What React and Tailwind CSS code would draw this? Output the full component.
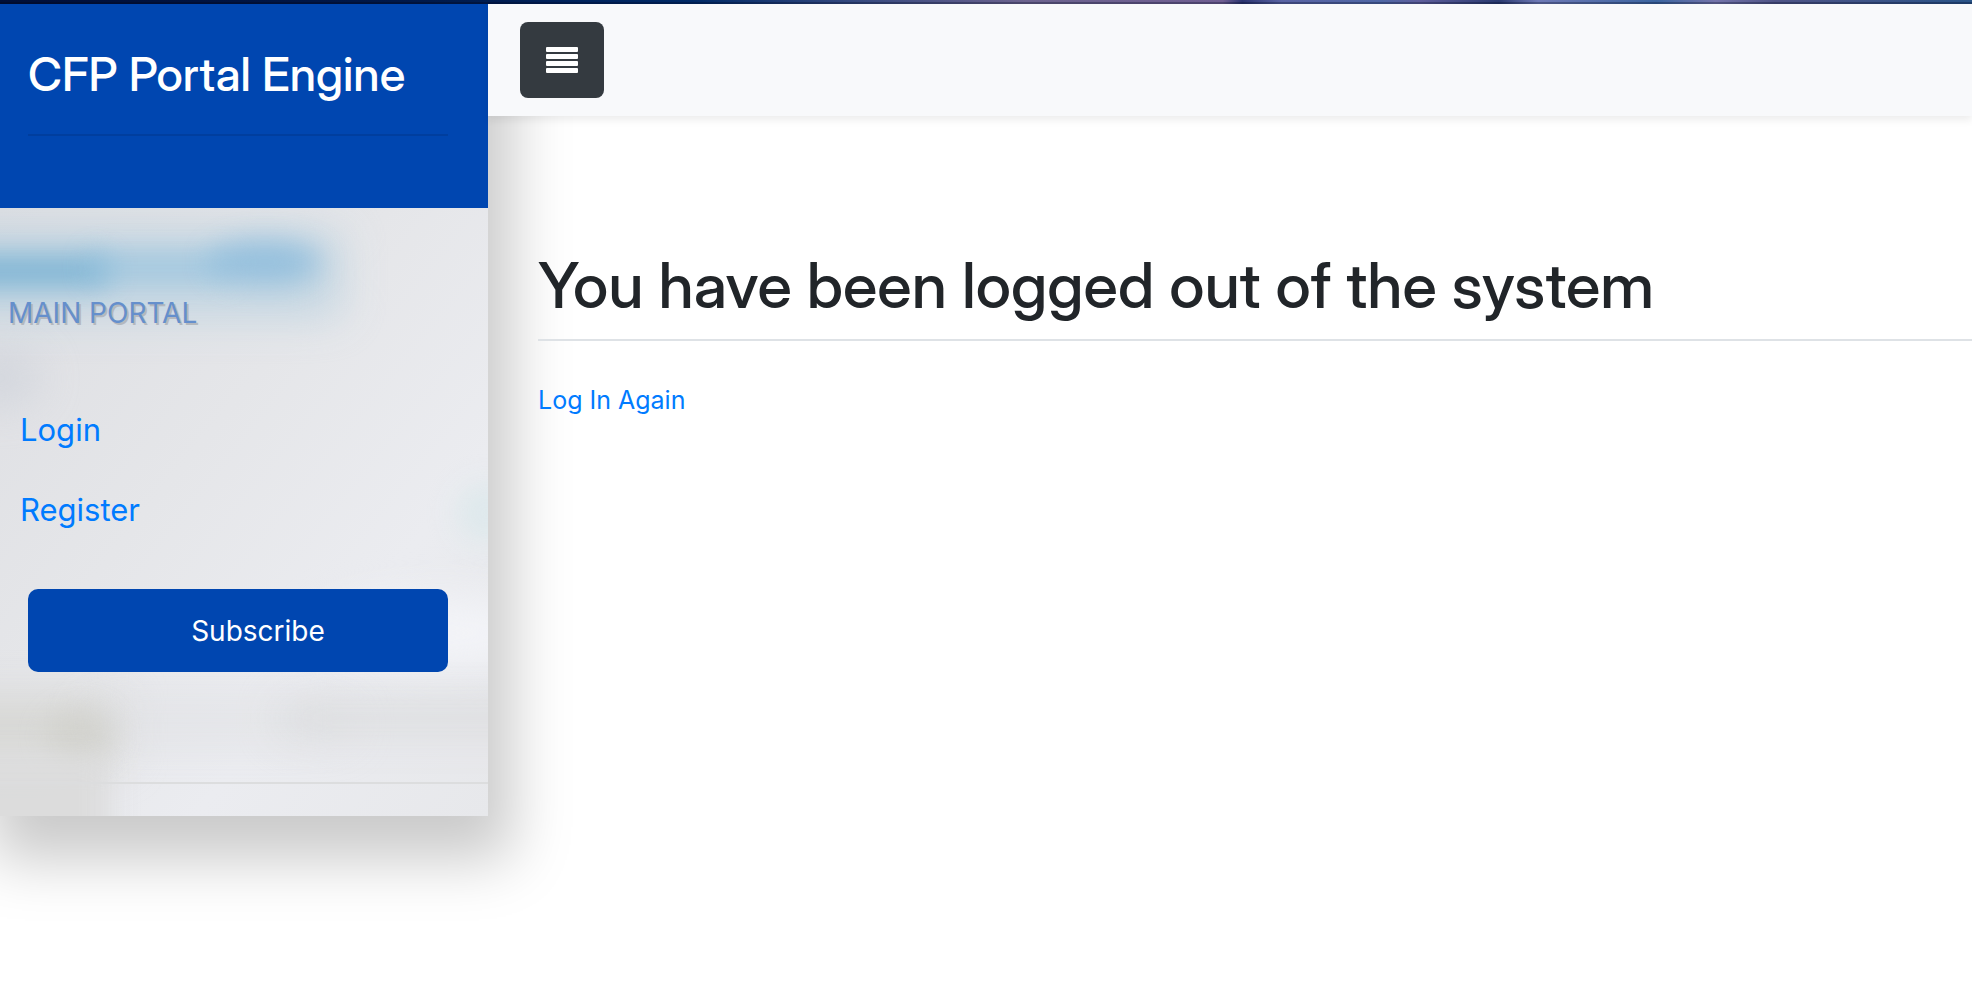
function AlignJustifyIcon() {
  return (
    <svg width="32" height="26" viewBox="0 0 32 26" aria-hidden="true">
      <rect x="0" y="0" width="32" height="5" rx="1" fill="#fff" />
      <rect x="0" y="7" width="32" height="5" rx="1" fill="#fff" />
      <rect x="0" y="14" width="32" height="5" rx="1" fill="#fff" />
      <rect x="0" y="21" width="32" height="5" rx="1" fill="#fff" />
    </svg>
  );
}

function SkylineStrip() {
  return (
    <svg className="block h-1 w-full" viewBox="0 0 1972 4" preserveAspectRatio="none" aria-hidden="true">
      <defs>
        <linearGradient id="sky" x1="0" y1="0" x2="1" y2="0">
          <stop offset="0" stopColor="#00103c" />
          <stop offset="0.2" stopColor="#001a4e" />
          <stop offset="0.35" stopColor="#002a66" />
          <stop offset="0.43" stopColor="#34497f" />
          <stop offset="0.52" stopColor="#6d648f" />
          <stop offset="0.62" stopColor="#705f92" />
          <stop offset="0.63" stopColor="#2b3470" />
          <stop offset="0.65" stopColor="#5a64a4" />
          <stop offset="0.7" stopColor="#5068a6" />
          <stop offset="0.72" stopColor="#5f5f9c" />
          <stop offset="0.76" stopColor="#2a3a70" />
          <stop offset="0.78" stopColor="#6f7ab6" />
          <stop offset="0.84" stopColor="#3c65a0" />
          <stop offset="0.87" stopColor="#7575ab" />
          <stop offset="0.9" stopColor="#505587" />
          <stop offset="1" stopColor="#2a5488" />
        </linearGradient>
      </defs>
      <rect width="1972" height="4" fill="url(#sky)" />
      <rect y="2" width="1972" height="2" fill="#00081f" opacity="0.3" />
    </svg>
  );
}

function SidebarBackdrop() {
  return (
    <svg
      className="absolute inset-0 h-full w-full"
      viewBox="0 0 488 608"
      preserveAspectRatio="none"
      aria-hidden="true"
    >
      <defs>
        <linearGradient id="base" x1="0" y1="0" x2="1" y2="1">
          <stop offset="0" stopColor="#dddee2" />
          <stop offset="0.4" stopColor="#e5e6e9" />
          <stop offset="0.7" stopColor="#ebecf0" />
          <stop offset="1" stopColor="#e7e8eb" />
        </linearGradient>
        <filter id="soft" x="-50%" y="-150%" width="200%" height="400%" colorInterpolationFilters="sRGB">
          <feGaussianBlur stdDeviation="14" />
        </filter>
        <filter id="wide" x="-50%" y="-150%" width="200%" height="400%" colorInterpolationFilters="sRGB">
          <feGaussianBlur stdDeviation="22" />
        </filter>
      </defs>
      <rect width="488" height="608" fill="url(#base)" />
      <rect x="-60" y="24" width="400" height="84" fill="#bdd3e1" opacity="0.85" filter="url(#wide)" />
      <rect x="-60" y="48" width="170" height="30" rx="12" fill="#64a8d0" opacity="0.75" filter="url(#soft)" />
      <rect x="90" y="46" width="140" height="26" fill="#8fc0de" opacity="0.7" filter="url(#soft)" />
      <ellipse cx="265" cy="54" rx="56" ry="22" fill="#86b9dc" opacity="0.75" filter="url(#soft)" />
      <ellipse cx="0" cy="170" rx="40" ry="26" fill="#cbd0d9" opacity="0.7" filter="url(#wide)" />
      <ellipse cx="486" cy="265" rx="30" ry="30" fill="#dde9ec" opacity="0.9" filter="url(#soft)" transform="translate(0 40)" />
      <ellipse cx="440" cy="425" rx="120" ry="34" fill="#f3f4f8" filter="url(#wide)" />
      <rect x="-60" y="490" width="180" height="60" fill="#d6d6d3" filter="url(#wide)" />
      <rect x="90" y="500" width="260" height="30" fill="#dddee1" opacity="0.7" filter="url(#wide)" />
      <rect x="280" y="496" width="340" height="28" fill="#d8d9da" opacity="0.9" filter="url(#wide)" />
      <ellipse cx="80" cy="528" rx="34" ry="26" fill="#d0d0ca" opacity="0.7" filter="url(#soft)" />
      <rect x="-60" y="550" width="170" height="140" fill="#dbdbdb" opacity="0.9" filter="url(#soft)" />
    </svg>
  );
}

function Sidebar() {
  return (
    <aside className="w-[488px] shrink-0 self-start shadow-[8px_28px_56px_16px_rgba(0,0,0,0.21)]">
      <div className="h-[204px] bg-[#0046b0] pt-10 pr-10 pl-7">
        <h3 className="font-['Inter_Display','Inter_Tight',Roboto,sans-serif] text-[47px] leading-[60px] font-medium whitespace-nowrap text-white">
          CFP Portal Engine
        </h3>
        <hr className="mt-[30px] border-t-2 border-black/10" />
      </div>
      <div className="relative">
        <SidebarBackdrop />
        <div className="relative pt-[84px] pb-8">
          <p className="pl-2 text-[28px] leading-[42px] text-[#658fcc] [text-shadow:2px_2px_#b4b8be]">MAIN PORTAL</p>
          <nav className="mt-14 flex flex-col">
            <a href="#login" className="px-5 py-4 text-[31px] leading-12 text-[#007bff]">Login</a>
            <a href="#register" className="px-5 py-4 text-[31px] leading-12 text-[#007bff]">Register</a>
          </nav>
          <div className="mt-[39px] pr-10 pl-7">
            <button type="button" className="block h-[83px] w-full rounded-[10px] bg-[#0046b0] pl-10 text-[28px] text-white">
              Subscribe
            </button>
          </div>
          <hr className="mt-[110px] border-t-2 border-[#dcddde]" />
        </div>
      </div>
    </aside>
  );
}

export default function App() {
  return (
    <div className="min-h-screen overflow-hidden bg-white font-['Inter',sans-serif] text-[#212529]">
      <SkylineStrip />
      <div className="flex">
        <Sidebar />
        <div className="relative min-w-0 grow">
          <header className="flex h-28 items-center bg-[#f8f9fb] px-8 shadow-[0_4px_8px_rgba(0,0,0,0.075)]">
            <button type="button" aria-label="Toggle menu" className="flex h-19 w-21 items-center justify-center rounded-lg bg-[#343a40]">
              <AlignJustifyIcon />
            </button>
          </header>
          <main className="pt-[131px] pl-[50px]">
            <h1 className="border-b-2 border-[#dee2e6] pb-4 font-['Inter_Display','Inter_Tight',Roboto,sans-serif] text-[63px] leading-[76px] font-medium">
              You have been logged out of the system
            </h1>
            <p className="mt-10 text-[25px] leading-[38px]">
              <a href="#login" className="text-[#007bff]">Log In Again</a>
            </p>
          </main>
        </div>
      </div>
    </div>
  );
}
